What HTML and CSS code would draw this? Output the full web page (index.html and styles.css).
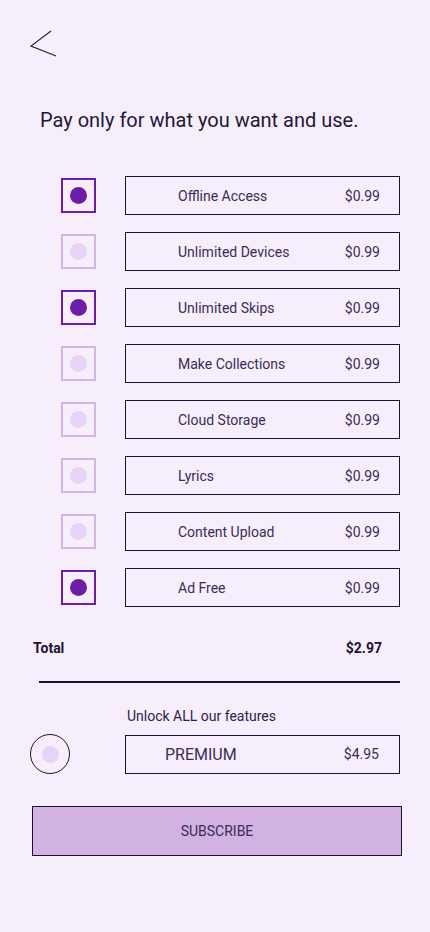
FILE: index.html
```html
<!DOCTYPE html>
<html lang="en">
<head>
    <meta charset="UTF-8">
    <meta name="viewport" content="width=device-width, initial-scale=1.0">
    <title>Choose Features</title>
    <link rel="stylesheet" href="styles.css">
</head>
<body>
    <div class="page">
        <header class="top-bar">
            <button class="back-btn" aria-label="Back">
                <svg width="30" height="30" viewBox="0 0 30 30">
                    <polyline points="24,1 4,16 29,26" fill="none" stroke="#2d1f47" stroke-width="1.2"/>
                </svg>
            </button>
        </header>

        <h1 class="title">Pay only for what you want and use.</h1>

        <ul class="feature-list">
            <li class="feature checked">
                <span class="check"><span class="dot"></span></span>
                <div class="feature-box"><span class="name">Offline Access</span><span class="price">$0.99</span></div>
            </li>
            <li class="feature">
                <span class="check"><span class="dot"></span></span>
                <div class="feature-box"><span class="name">Unlimited Devices</span><span class="price">$0.99</span></div>
            </li>
            <li class="feature checked">
                <span class="check"><span class="dot"></span></span>
                <div class="feature-box"><span class="name">Unlimited Skips</span><span class="price">$0.99</span></div>
            </li>
            <li class="feature">
                <span class="check"><span class="dot"></span></span>
                <div class="feature-box"><span class="name">Make Collections</span><span class="price">$0.99</span></div>
            </li>
            <li class="feature">
                <span class="check"><span class="dot"></span></span>
                <div class="feature-box"><span class="name">Cloud Storage</span><span class="price">$0.99</span></div>
            </li>
            <li class="feature">
                <span class="check"><span class="dot"></span></span>
                <div class="feature-box"><span class="name">Lyrics</span><span class="price">$0.99</span></div>
            </li>
            <li class="feature">
                <span class="check"><span class="dot"></span></span>
                <div class="feature-box"><span class="name">Content Upload</span><span class="price">$0.99</span></div>
            </li>
            <li class="feature checked">
                <span class="check"><span class="dot"></span></span>
                <div class="feature-box"><span class="name">Ad Free</span><span class="price">$0.99</span></div>
            </li>
        </ul>

        <div class="total">
            <span>Total</span>
            <span>$2.97</span>
        </div>

        <hr class="divider">

        <p class="unlock">Unlock ALL our features</p>

        <div class="premium">
            <span class="radio"><span class="dot"></span></span>
            <div class="premium-box"><span class="name">PREMIUM</span><span class="price">$4.95</span></div>
        </div>

        <button class="subscribe-btn">SUBSCRIBE</button>
    </div>
</body>
</html>
```

FILE: styles.css
```css
* {
    box-sizing: border-box;
}

body {
    margin: 0;
    padding: 0;
    background-color: #f6eefa;
    font-family: Roboto, 'Noto Sans', sans-serif;
    color: #2d1f47;
}

.page {
    width: 430px;
    min-height: 932px;
}

.top-bar {
    padding: 30px 0 0 27px;
    height: 60px;
}

.back-btn {
    background: none;
    border: none;
    padding: 0;
    cursor: pointer;
    display: block;
}

.back-btn svg {
    display: block;
}

.title {
    margin: 48px 0 0 40px;
    font-size: 20px;
    font-weight: 400;
    line-height: 24px;
    color: #241838;
}

.feature-list {
    list-style: none;
    margin: 44px 0 0 0;
    padding: 0 30px 0 61px;
    display: flex;
    flex-direction: column;
    gap: 17px;
}

.feature {
    display: flex;
    align-items: center;
    gap: 29px;
}

.check {
    width: 35px;
    height: 35px;
    border: 2px solid #d3b6e6;
    display: flex;
    justify-content: center;
    align-items: center;
    flex-shrink: 0;
}

.check .dot,
.radio .dot {
    width: 17px;
    height: 17px;
    border-radius: 50%;
    background-color: #e8d3f8;
}

.feature.checked .check {
    border-color: #6c1fa6;
}

.feature.checked .check .dot {
    background-color: #6c1fa6;
}

.feature-box,
.premium-box {
    flex: 1;
    height: 39px;
    border: 1px solid #1e0f35;
    display: flex;
    align-items: center;
    justify-content: space-between;
    padding: 0 19px 0 52px;
    font-size: 14px;
    color: #3b2c58;
}

.total {
    display: flex;
    justify-content: space-between;
    padding: 0 48px 0 33px;
    margin-top: 33px;
    font-size: 14px;
    font-weight: 700;
    color: #1e1233;
}

.divider {
    margin: 25px 30px 0 39px;
    border: none;
    border-top: 2px solid #1e0f35;
}

.unlock {
    margin: 25px 0 0 127px;
    font-size: 14px;
    color: #2d1f47;
}

.premium {
    display: flex;
    align-items: center;
    gap: 55px;
    padding: 0 30px 0 30px;
    margin-top: 10px;
}

.radio {
    width: 40px;
    height: 40px;
    border-radius: 50%;
    border: 1px solid #1e0f35;
    display: flex;
    justify-content: center;
    align-items: center;
    flex-shrink: 0;
}

.premium-box {
    padding: 0 20px 0 39px;
}

.premium-box .name {
    font-size: 16px;
}

.subscribe-btn {
    display: block;
    margin: 32px 0 0 32px;
    width: 370px;
    height: 50px;
    background-color: #d1b2e3;
    border: 1px solid #1e0f35;
    font-family: Roboto, 'Noto Sans', sans-serif;
    font-size: 14px;
    color: #3b2c58;
    cursor: pointer;
}
```
